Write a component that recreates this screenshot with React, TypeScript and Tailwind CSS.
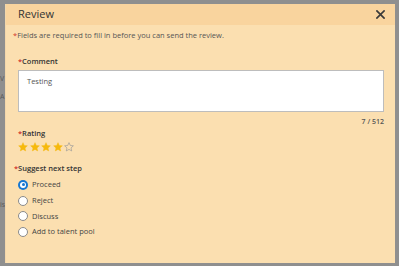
import React from "react";

const font = { fontFamily: '"Open Sans", "Noto Sans", sans-serif' };

function Star({ filled }: { filled: boolean }) {
  return (
    <svg width="10" height="10" viewBox="0 0 24 24">
      <polygon
        points="12,1.5 15.1,8.3 22.5,9.1 16.9,14.1 18.5,21.5 12,17.7 5.5,21.5 7.1,14.1 1.5,9.1 8.9,8.3"
        fill={filled ? "#f6b90c" : "none"}
        stroke={filled ? "#f6b90c" : "#9a9a9a"}
        strokeWidth={filled ? 1 : 1.6}
        strokeLinejoin="round"
      />
    </svg>
  );
}

function Radio({ label, checked }: { label: string; checked?: boolean }) {
  return (
    <div className="flex items-center gap-[4px] h-[15.7px]">
      {checked ? (
        <span className="w-[10px] h-[10px] rounded-full bg-[#1677d2] flex items-center justify-center">
          <span className="w-[6px] h-[6px] rounded-full bg-white flex items-center justify-center">
            <span className="w-[3px] h-[3px] rounded-full bg-[#1677d2]" />
          </span>
        </span>
      ) : (
        <span className="w-[10px] h-[10px] rounded-full bg-white border border-[#8a8a8a]" />
      )}
      <span className="text-[7.5px] text-[#444]">{label}</span>
    </div>
  );
}

function Req({ children }: { children: React.ReactNode }) {
  return (
    <div className="text-[7.5px] font-semibold text-[#333] leading-none">
      <span className="text-[#d0342c]">*</span>
      {children}
    </div>
  );
}

export default function App() {
  return (
    <div className="w-[399px] h-[266px] bg-[#8f8f8f] overflow-hidden relative" style={font}>
      {/* faint page text behind the overlay */}
      <span className="absolute left-[0px] top-[74px] text-[7px] text-[#5a5a5a]">V</span>
      <span className="absolute left-[0px] top-[92px] text-[7px] text-[#5a5a5a]">A</span>
      <span className="absolute left-[0px] top-[200px] text-[7px] text-[#5a5a5a]">is</span>

      <div className="pt-[4px] pl-[5px]">
        <div className="w-[390px] h-[259px] bg-[#fbdfb0] border-l border-[#f3d7ab] flex flex-col relative">
          <div className="h-[21px] bg-[#f9d49e] flex items-center justify-between pl-[12px] pr-[10px]">
            <span className="text-[11px] text-[#333]">Review</span>
            <svg width="9" height="9" viewBox="0 0 10 10">
              <path d="M1 1 L9 9 M9 1 L1 9" stroke="#3a3a3a" strokeWidth="1.8" strokeLinecap="square" />
            </svg>
          </div>

          <div className="pl-[7px] pt-[7px] text-[7.5px] text-[#555] leading-none">
            <span className="text-[#d0342c]">*</span>Fields are required to fill in before you can send the review.
          </div>

          <div className="pl-[12px] pr-[11px] pt-[18px] flex flex-col">
            <Req>Comment</Req>
            <div className="mt-[5px] h-[42px] bg-white border border-[#bdbdbd] px-[8px] pt-[5px] text-[7.5px] text-[#555]">
              Testing
            </div>
            <div className="mt-[6px] self-end text-[7px] font-semibold text-[#555] leading-none">7 / 512</div>

            <div className="mt-[5px]">
              <Req>Rating</Req>
            </div>
            <div className="mt-[4px] flex gap-[1.5px]">
              <Star filled />
              <Star filled />
              <Star filled />
              <Star filled />
              <Star filled={false} />
            </div>
          </div>

          <div className="pl-[8px] pt-[13px]">
            <Req>Suggest next step</Req>
            <div className="mt-[5px] pl-[4px] flex flex-col">
              <Radio label="Proceed" checked />
              <Radio label="Reject" />
              <Radio label="Discuss" />
              <Radio label="Add to talent pool" />
            </div>
          </div>
        </div>
      </div>
    </div>
  );
}
